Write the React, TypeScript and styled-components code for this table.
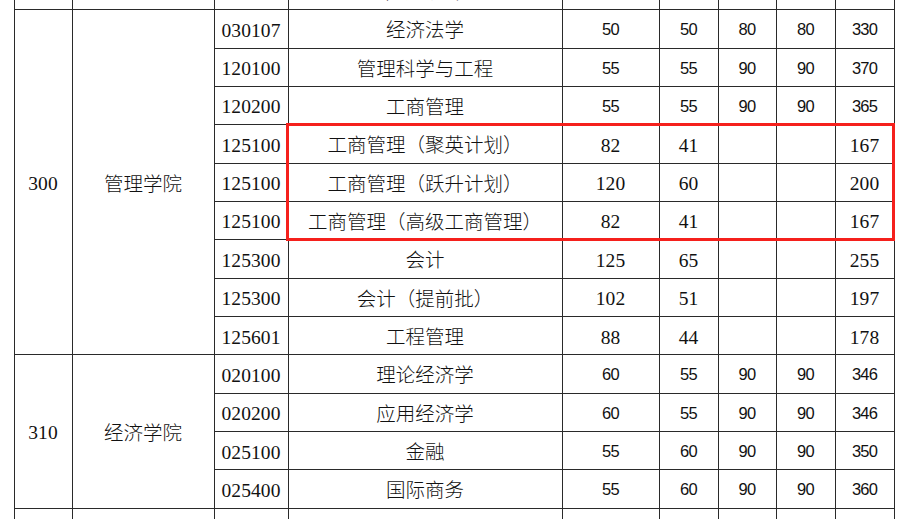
import React from "react";
import styled, { createGlobalStyle, css } from "styled-components";

const ROW_H = 38.35;

const GlobalStyle = createGlobalStyle`
  html, body {
    margin: 0;
    padding: 0;
    background: #ffffff;
  }
`;

const Viewport = styled.div`
  width: 902px;
  height: 519px;
  overflow: hidden;
  background: #ffffff;
`;

const TableWrap = styled.div`
  position: relative;
  width: 880px;
  margin: -29px 0 0 13.5px;
`;

const Table = styled.table`
  border-collapse: collapse;
  table-layout: fixed;
  width: 880px;
  color: #111111;
`;

const Row = styled.tr`
  height: ${ROW_H}px;
`;

const cellBase = css`
  border: 1px solid #2a2a2a;
  padding: 0;
  text-align: center;
  vertical-align: middle;
  white-space: nowrap;
  overflow: hidden;
`;

const TextCell = styled.td`
  ${cellBase}
  font-family: "Noto Sans CJK SC", "Noto Sans", sans-serif;
  font-size: 19.5px;
  font-weight: 300;
  line-height: 1;
`;

const NumCell = styled.td<{ $song?: boolean }>`
  ${cellBase}
  line-height: 1;
  ${({ $song }) =>
    $song
      ? css`
          font-family: "Liberation Serif", "Times New Roman", serif;
          font-size: 19.5px;
          letter-spacing: 0.1px;
          padding-top: 3px;
        `
      : css`
          font-family: "Liberation Sans", Arial, sans-serif;
          font-size: 16.5px;
          letter-spacing: -0.8px;
          padding-top: 1px;
        `}
`;

const Highlight = styled.div<{ $top: number; $height: number }>`
  position: absolute;
  left: 272px;
  right: -1px;
  top: ${({ $top }) => $top}px;
  height: ${({ $height }) => $height}px;
  border: 3px solid #f5201c;
  box-sizing: border-box;
  pointer-events: none;
`;

type Major = {
  code: string;
  name: string;
  nums: string[];
  song?: boolean;
};

type College = {
  code: string;
  name: string;
  majors: Major[];
};

const colleges: College[] = [
  {
    code: "",
    name: "",
    majors: [{ code: "027000", name: "应用统计", nums: ["55", "55", "90", "90", "350"] }],
  },
  {
    code: "300",
    name: "管理学院",
    majors: [
      { code: "030107", name: "经济法学", nums: ["50", "50", "80", "80", "330"] },
      { code: "120100", name: "管理科学与工程", nums: ["55", "55", "90", "90", "370"] },
      { code: "120200", name: "工商管理", nums: ["55", "55", "90", "90", "365"] },
      { code: "125100", name: "工商管理（聚英计划）", nums: ["82", "41", "", "", "167"], song: true },
      { code: "125100", name: "工商管理（跃升计划）", nums: ["120", "60", "", "", "200"], song: true },
      { code: "125100", name: "工商管理（高级工商管理）", nums: ["82", "41", "", "", "167"], song: true },
      { code: "125300", name: "会计", nums: ["125", "65", "", "", "255"], song: true },
      { code: "125300", name: "会计（提前批）", nums: ["102", "51", "", "", "197"], song: true },
      { code: "125601", name: "工程管理", nums: ["88", "44", "", "", "178"], song: true },
    ],
  },
  {
    code: "310",
    name: "经济学院",
    majors: [
      { code: "020100", name: "理论经济学", nums: ["60", "55", "90", "90", "346"] },
      { code: "020200", name: "应用经济学", nums: ["60", "55", "90", "90", "346"] },
      { code: "025100", name: "金融", nums: ["55", "60", "90", "90", "350"] },
      { code: "025400", name: "国际商务", nums: ["55", "60", "90", "90", "360"] },
    ],
  },
  {
    code: "320",
    name: "",
    majors: [{ code: "120400", name: "公共管理学科", nums: ["55", "55", "90", "90", "350"] }],
  },
];

const widths = [58, 142, 74, 274, 97, 59, 58, 59, 59];

const App: React.FC = () => {
  return (
    <Viewport>
      <GlobalStyle />
      <TableWrap>
        <Table>
          <colgroup>
            {widths.map((w, i) => (
              <col key={i} style={{ width: w }} />
            ))}
          </colgroup>
          <tbody>
            {colleges.map((college, ci) =>
              college.majors.map((m, mi) => (
                <Row key={`${ci}-${mi}`}>
                  {mi === 0 && (
                    <>
                      <NumCell $song rowSpan={college.majors.length}>
                        {college.code}
                      </NumCell>
                      <TextCell rowSpan={college.majors.length}>{college.name}</TextCell>
                    </>
                  )}
                  <NumCell $song>{m.code}</NumCell>
                  <TextCell>{m.name}</TextCell>
                  {m.nums.map((n, ni) => (
                    <NumCell key={ni} $song={m.song}>
                      {n}
                    </NumCell>
                  ))}
                </Row>
              ))
            )}
          </tbody>
        </Table>
        <Highlight $top={ROW_H * 4 - 1} $height={ROW_H * 3 + 3} />
      </TableWrap>
    </Viewport>
  );
};

export default App;
